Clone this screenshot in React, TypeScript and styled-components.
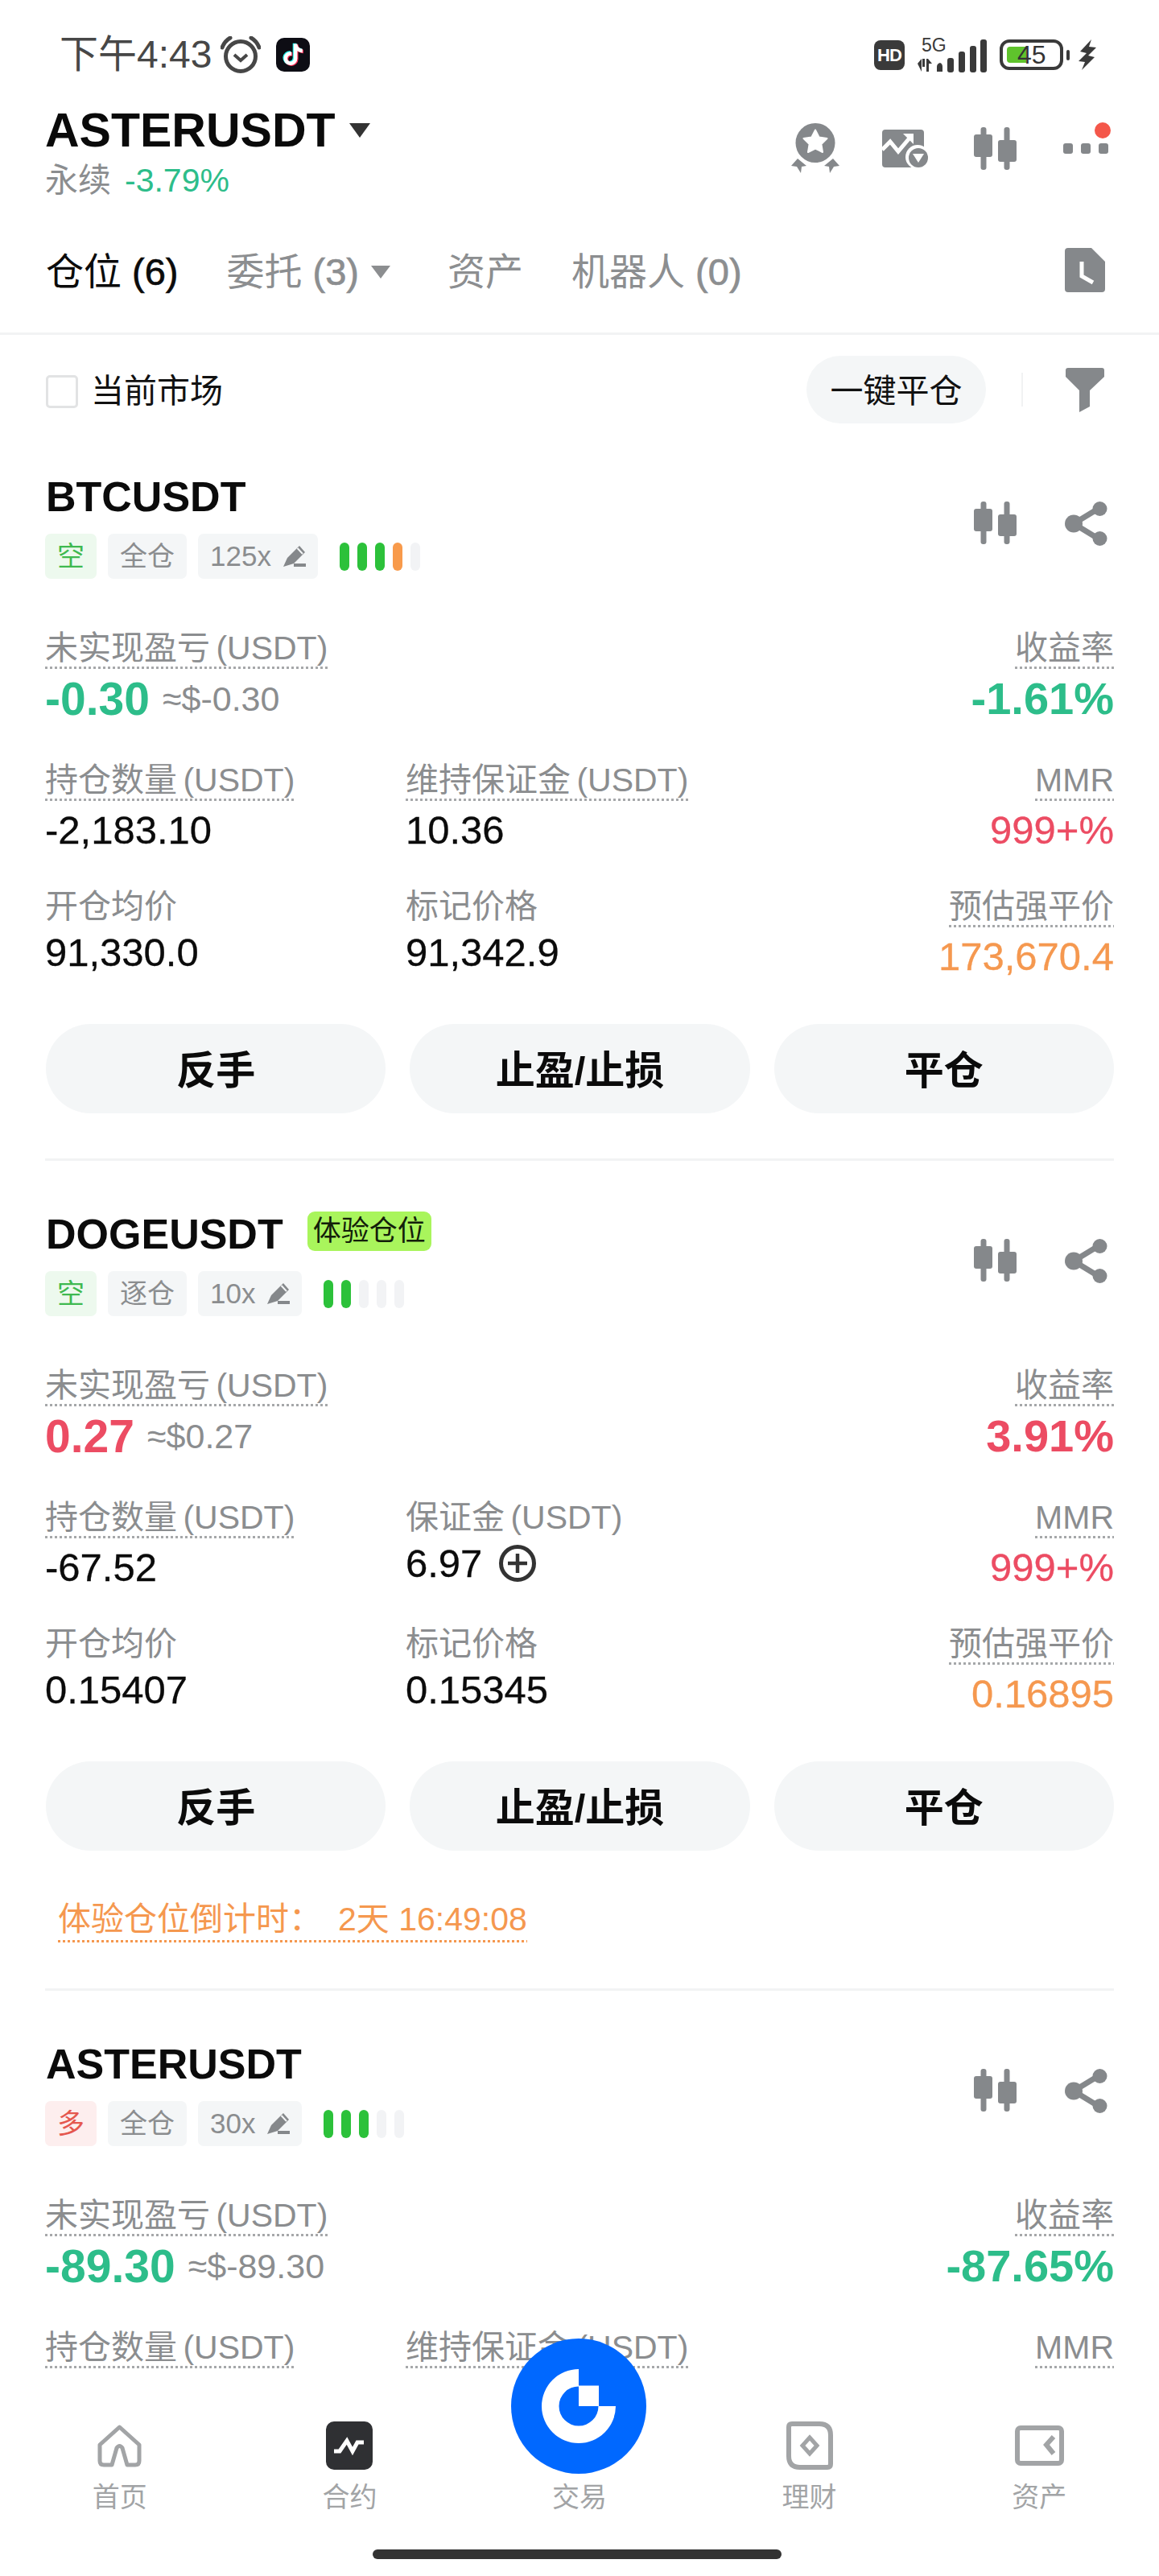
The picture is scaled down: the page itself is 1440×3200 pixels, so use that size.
import React from "react";
import styled, { createGlobalStyle } from "styled-components";

const GlobalStyle = createGlobalStyle`
  html, body { margin: 0; padding: 0; background: #fff; }
  * { box-sizing: border-box; }
  #root { width: 1440px; height: 3200px; }
`;

const GRAY = "#85888b";
const LABEL = "#8b8d8f";
const GREEN = "#2dbd8a";
const RED = "#ec4c63";
const ORANGE = "#f5984f";
const SOFT = "#f4f6f7";
const NAV = "#a2a4a6";

const Page = styled.div`
  position: relative;
  width: 1440px;
  height: 3200px;
  overflow: hidden;
  background: #fff;
  color: #0b0b0b;
  font-family: "Liberation Sans", "Noto Sans CJK SC", sans-serif;
`;

/* status bar */
const StatusBar = styled.div`
  height: 130px;
  padding: 45px 78px 0 74px;
  display: flex;
  justify-content: space-between;
  align-items: flex-start;
`;
const StatusLeft = styled.div`
  display: flex;
  align-items: center;
  height: 46px;
`;
const StatusTime = styled.span`
  font-size: 48px;
  line-height: 46px;
  color: #474747;
  margin-right: 11px;
`;
const AlarmSlot = styled.span`
  display: flex;
  margin-right: 19px;
`;
const StatusRight = styled.div`
  display: flex;
  align-items: center;
  height: 46px;
`;
const HdBadge = styled.span`
  width: 38px;
  height: 37px;
  background: #3a3a3a;
  border-radius: 8px;
  color: #fff;
  font-size: 22px;
  font-weight: 700;
  line-height: 37px;
  text-align: center;
  letter-spacing: -1px;
  margin-right: 16px;
`;
const NetworkBlock = styled.div`
  position: relative;
  width: 86px;
  height: 46px;
  margin-right: 16px;
`;
const FiveG = styled.span`
  position: absolute;
  left: 5px;
  top: 0;
  font-size: 23px;
  line-height: 22px;
  color: #3a3a3a;
`;
const Battery = styled.div`
  position: relative;
  width: 79px;
  height: 38px;
  border: 4px solid #3a3a3a;
  border-radius: 12px;
  padding: 4px;
  margin-right: 4px;
  text-align: center;
`;
const BatteryFill = styled.div`
  position: absolute;
  left: 5px;
  top: 5px;
  bottom: 5px;
  width: 24px;
  background: #5fc32c;
  border-radius: 4px 0 0 4px;
`;
const BatteryText = styled.span`
  position: absolute;
  left: 18px;
  top: -3px;
  font-size: 32px;
  line-height: 36px;
  color: #333;
`;
const BatteryNub = styled.div`
  width: 4px;
  height: 13px;
  background: #3a3a3a;
  border-radius: 2px;
  margin-right: 11px;
`;

/* header */
const Header = styled.div`
  padding: 0 63px 0 56px;
  height: 118px;
  display: flex;
  justify-content: space-between;
  align-items: flex-start;
`;
const TitleRow = styled.div`
  display: flex;
  align-items: center;
  height: 64px;
`;
const MainTitle = styled.span`
  font-size: 59px;
  font-weight: 700;
  line-height: 64px;
  color: #0a0a0a;
`;
const Caret = styled.i<{ $w: number; $h: number; $c: string; $ml: number }>`
  display: block;
  width: 0;
  height: 0;
  margin-left: ${(p) => p.$ml}px;
  border-left: ${(p) => p.$w / 2}px solid transparent;
  border-right: ${(p) => p.$w / 2}px solid transparent;
  border-top: ${(p) => p.$h}px solid ${(p) => p.$c};
`;
const SubRow = styled.div`
  display: flex;
  gap: 17px;
  margin-top: 6px;
  font-size: 41px;
  line-height: 48px;
`;
const SubLabel = styled.span`
  color: ${LABEL};
`;
const SubChange = styled.span`
  color: ${GREEN};
`;
const HeaderIcons = styled.div`
  height: 62px;
  margin-top: 23px;
  display: flex;
  align-items: center;
`;
const HeaderIconSlot = styled.span<{ $ml?: number }>`
  display: flex;
  margin-left: ${(p) => p.$ml ?? 0}px;
`;
const MoreWrap = styled.div`
  position: relative;
  width: 56px;
  height: 13px;
  display: flex;
  justify-content: space-between;
`;
const MoreDot = styled.i`
  display: block;
  width: 12px;
  height: 13px;
  border-radius: 3px;
  background: ${GRAY};
`;
const RedDot = styled.i`
  position: absolute;
  right: -3px;
  top: -26px;
  width: 20px;
  height: 20px;
  border-radius: 50%;
  background: #f4574a;
`;

/* tabs */
const Tabs = styled.div`
  height: 168px;
  padding: 60px 67px 0 57px;
  border-bottom: 3px solid #f2f3f4;
  display: flex;
  align-items: flex-start;
  justify-content: space-between;
`;
const TabList = styled.div`
  display: flex;
  align-items: center;
  gap: 60px;
  height: 60px;
`;
const Tab = styled.div<{ $active?: boolean; $ml?: number }>`
  display: flex;
  align-items: center;
  margin-left: ${(p) => p.$ml ?? 0}px;
  font-size: 47px;
  line-height: 60px;
  white-space: pre;
  color: ${(p) => (p.$active ? "#0b0b0b" : "#8c8e90")};
`;
const TabCount = styled.span`
  -webkit-text-stroke: 0.7px currentColor;
`;

/* filter */
const FilterRow = styled.div`
  padding: 26px 68px 0 57px;
  height: 110px;
  display: flex;
  justify-content: space-between;
  align-items: flex-start;
`;
const CheckLabel = styled.label`
  display: flex;
  align-items: center;
  gap: 16px;
  height: 84px;
  padding-bottom: 4px;
  font-size: 41px;
  color: #111;
`;
const CheckBox = styled.span`
  width: 40px;
  height: 41px;
  border: 3px solid #e2e3e4;
  border-radius: 5px;
  margin-top: 8px;
`;
const FilterActions = styled.div`
  display: flex;
  align-items: center;
`;
const CloseAll = styled.button`
  width: 223px;
  height: 84px;
  border: 0;
  padding: 0 0 4px;
  border-radius: 42px;
  background: ${SOFT};
  font-family: inherit;
  font-size: 41px;
  color: #111;
`;
const VDivider = styled.i`
  display: block;
  width: 2px;
  height: 42px;
  background: #f1f2f3;
  margin: 0 53px 0 44px;
`;

/* card */
const Card = styled.section`
  margin: 0 56px;
  padding-top: 61px;
  border-bottom: 3px solid #f2f3f4;
`;
const CardHead = styled.div`
  display: flex;
  justify-content: space-between;
  align-items: flex-start;
`;
const CardTitleRow = styled.div`
  display: flex;
  align-items: flex-start;
  gap: 30px;
  height: 60px;
  padding-left: 1px;
`;
const CardTitle = styled.span`
  font-size: 52px;
  font-weight: 700;
  line-height: 60px;
`;
const TrialBadge = styled.span`
  height: 49px;
  margin-top: 2px;
  padding: 0 7px;
  border-radius: 9px;
  background: #a9f55c;
  color: #13200a;
  font-size: 35px;
  line-height: 48px;
`;
const TagRow = styled.div`
  display: flex;
  align-items: center;
  margin-top: 16px;
  gap: 14px;
`;
const Tag = styled.span<{ $tone?: "short" | "long" }>`
  display: flex;
  align-items: center;
  gap: 15px;
  height: 56px;
  padding: 0 15px;
  border-radius: 7px;
  font-size: 34px;
  line-height: 56px;
  color: ${(p) => (p.$tone === "short" ? "#3fb950" : p.$tone === "long" ? "#e5584f" : LABEL)};
  background: ${(p) => (p.$tone === "short" ? "#edf9ee" : p.$tone === "long" ? "#fdeeee" : SOFT)};
`;
const LevText = styled.span`
  font-size: 35px;
`;
const Meter = styled.div`
  display: flex;
  gap: 10px;
  margin-left: 13px;
`;
const MeterBar = styled.i<{ $c: string }>`
  display: block;
  width: 12px;
  height: 35px;
  border-radius: 6px;
  background: ${(p) => p.$c};
`;
const CardIcons = styled.div`
  display: flex;
  gap: 60px;
  margin: 36px 8px 0 0;
`;
const DataGrid = styled.div`
  display: grid;
  grid-template-columns: 448px 1fr auto;
  grid-template-rows: 164px 157px 169px;
  margin-top: 63px;
`;
const Cell = styled.div<{ $right?: boolean; $col: number }>`
  grid-column: ${(p) => p.$col};
  display: flex;
  flex-direction: column;
  align-items: ${(p) => (p.$right ? "flex-end" : "flex-start")};
`;
const Label = styled.span<{ $dotted?: boolean }>`
  display: block;
  font-size: 41px;
  line-height: 46px;
  word-spacing: -4px;
  color: ${LABEL};
  white-space: nowrap;
  ${(p) =>
    p.$dotted
      ? `padding-bottom: 3px;
         margin-bottom: 8px;
         background: linear-gradient(to right, #a6a8aa 50%, transparent 50%) left bottom / 6px 3px repeat-x;`
      : `margin-bottom: 6px;`}
`;
const PnlRow = styled.div`
  display: flex;
  align-items: center;
  gap: 16px;
`;
const PnlValue = styled.span<{ $c: string }>`
  font-size: 57px;
  font-weight: 700;
  line-height: 58px;
  color: ${(p) => p.$c};
`;
const RoeValue = styled.span<{ $c: string }>`
  font-size: 56px;
  font-weight: 700;
  line-height: 58px;
  color: ${(p) => p.$c};
`;
const ApproxValue = styled.span`
  font-size: 43px;
  line-height: 58px;
  color: ${LABEL};
`;
const Value = styled.span<{ $c?: string }>`
  display: flex;
  align-items: center;
  gap: 20px;
  font-size: 49px;
  line-height: 56px;
  -webkit-text-stroke: 0.3px currentColor;
  color: ${(p) => p.$c ?? "#0b0b0b"};
`;
const Actions = styled.div`
  display: grid;
  grid-template-columns: repeat(3, 1fr);
  gap: 30px;
  padding-left: 1px;
  margin-bottom: 56px;
`;
const ActionButton = styled.button`
  height: 111px;
  border: 0;
  padding: 0 0 5px;
  border-radius: 56px;
  background: ${SOFT};
  color: #0b0b0b;
  font-family: inherit;
  font-size: 49px;
  font-weight: 700;
`;
const Countdown = styled.div`
  display: inline-flex;
  gap: 20px;
  margin: 6px 0 57px 16px;
  padding-bottom: 6px;
  font-size: 41px;
  line-height: 46px;
  color: ${ORANGE};
  background: linear-gradient(to right, ${ORANGE} 50%, transparent 50%) left bottom / 6px 3px repeat-x;
`;

/* nav */
const BottomNav = styled.nav`
  position: absolute;
  left: 0;
  right: 0;
  bottom: 0;
  height: 250px;
  padding: 58px 6px 0;
  background: #fff;
`;
const NavGrid = styled.div`
  display: grid;
  grid-template-columns: repeat(5, 1fr);
`;
const NavItem = styled.div`
  display: flex;
  flex-direction: column;
  align-items: center;
`;
const NavIconSlot = styled.div`
  height: 60px;
  display: flex;
  align-items: center;
  justify-content: center;
`;
const NavLabel = styled.span`
  margin-top: 12px;
  font-size: 34px;
  line-height: 44px;
  color: ${NAV};
`;
const HomeBar = styled.div`
  position: absolute;
  left: 463px;
  width: 508px;
  bottom: 21px;
  height: 12px;
  border-radius: 6px;
  background: #333;
`;
const TradeButton = styled.div`
  position: absolute;
  left: 635px;
  top: 2905px;
  width: 168px;
  height: 168px;
  border-radius: 50%;
  background: #0068ff;
  display: flex;
  align-items: center;
  justify-content: center;
`;

/* icons */
const CandleIcon = () => (
  <svg width="53" height="53" viewBox="0 0 53 53" fill={GRAY}>
    <rect x="8.5" y="0" width="7" height="53" rx="3" />
    <rect x="0" y="9" width="23" height="28" rx="3" />
    <rect x="37.5" y="0" width="7" height="53" rx="3" />
    <rect x="30" y="16" width="23" height="27" rx="3" />
  </svg>
);
const ShareIcon = () => (
  <svg width="53" height="55" viewBox="0 0 53 55" fill={GRAY}>
    <path d="M43 8 11 27.5 43 47" fill="none" stroke={GRAY} strokeWidth="7" />
    <circle cx="43.5" cy="9" r="9" />
    <circle cx="11" cy="27.5" r="11" />
    <circle cx="43.5" cy="46" r="9" />
  </svg>
);
const PencilIcon = () => (
  <svg width="28" height="26" viewBox="0 0 28 26" fill={GRAY}>
    <path d="M20 0 27 8 13 22 0 26 5 15Z" />
    <rect x="13" y="22" width="15" height="4" />
    <path d="M17.5 3 24 10" stroke="#f4f6f7" strokeWidth="2" />
  </svg>
);
const BadgeIcon = () => (
  <svg width="60" height="62" viewBox="0 0 60 62" fill={GRAY}>
    <circle cx="30" cy="24.5" r="24.5" />
    <path
      d="M30 8.5 34.6 17.4 44.5 19 37.4 26.1 39 36 30 31.5 21 36 22.6 26.1 15.5 19 25.4 17.4Z"
      fill="#fff"
      stroke="#fff"
      strokeWidth="2"
      strokeLinejoin="round"
    />
    <path d="M0 53 8 44 19 53 13 54 12 62 7 54Z" />
    <path d="M60 53 52 44 41 53 47 54 48 62 53 54Z" />
  </svg>
);
const ChartIcon = () => (
  <svg width="58" height="47" viewBox="0 0 58 47">
    <rect x="0" y="0" width="52" height="47" rx="4" fill={GRAY} />
    <path d="M0 25 10 15 20 27 37 7" fill="none" stroke="#fff" strokeWidth="5" />
    <path d="M26 5H39V18Z" fill="#fff" />
    <circle cx="44" cy="34" r="15" fill="#fff" />
    <circle cx="45" cy="35" r="12" fill={GRAY} />
    <path d="M38 30H52L45 41Z" fill="#fff" />
  </svg>
);
const DocIcon = () => (
  <svg width="50" height="55" viewBox="0 0 50 55">
    <path d="M4 0H33L50 17V51Q50 55 46 55H4Q0 55 0 51V4Q0 0 4 0Z" fill={GRAY} />
    <path d="M21 17V35L35 43" fill="none" stroke="#fff" strokeWidth="5" />
  </svg>
);
const FunnelIcon = () => (
  <svg width="48" height="55" viewBox="0 0 48 55" fill={GRAY}>
    <path d="M3 0H45Q48 0 48 3V11L30 28V48L17 55V28L0 11V3Q0 0 3 0Z" />
  </svg>
);
const PlusCircle = () => (
  <svg width="48" height="46" viewBox="0 0 48 46" fill="none" stroke="#333">
    <circle cx="24" cy="23" r="20.5" strokeWidth="5" />
    <path d="M12 23H36M24 11V35" strokeWidth="4.5" />
  </svg>
);
const AlarmIcon = () => (
  <svg width="50" height="46" viewBox="0 0 50 46" fill="none" stroke="#474747">
    <circle cx="25" cy="25" r="18.5" strokeWidth="5" />
    <path d="M17 23 25 30 33 23" strokeWidth="4" />
    <path d="M2 14Q5 6 12 2M48 14Q45 6 38 2" strokeWidth="5" strokeLinecap="round" />
  </svg>
);
const TIKTOK =
  "M448,209.91a210.06,210.06,0,0,1-122.77-39.25V349.38A162.55,162.55,0,1,1,185,188.31V278.2a74.62,74.62,0,1,0,52.23,71.18V0l88,0a121.18,121.18,0,0,0,1.86,22.17h0A122.18,122.18,0,0,0,381,102.39a121.43,121.43,0,0,0,67,20.14Z";
const TiktokIcon = () => (
  <svg width="42" height="42" viewBox="0 0 42 42">
    <rect width="42" height="42" rx="10" fill="#0d0d14" />
    <g transform="translate(9.5 7.5) scale(0.052)">
      <path d={TIKTOK} fill="#25f4ee" transform="translate(-22 -16)" />
      <path d={TIKTOK} fill="#fe2c55" transform="translate(22 16)" />
      <path d={TIKTOK} fill="#fff" />
    </g>
  </svg>
);
const NetIcon = () => (
  <svg width="86" height="46" viewBox="0 0 86 46" fill="#3a3a3a">
    <path d="M0 34 5 28V44ZM6 28H9V38H6ZM11 28 11 44 14 44 14 34 18 34 13 28Z" />
    <path d="M24 44V38Q24 34 28 33 31 34 31 38V44Z" />
    <rect x="37" y="27" width="8" height="18" rx="3" />
    <rect x="51" y="19" width="8" height="26" rx="3" />
    <rect x="65" y="12" width="8" height="33" rx="3" />
    <rect x="78" y="4" width="8" height="41" rx="3" />
  </svg>
);
const BoltIcon = () => (
  <svg width="22" height="38" viewBox="0 0 22 38" fill="#3a3a3a">
    <path d="M16 0 2 15 10 17 0 27 8 28 4 38 20 22 12 20 22 10 13 9Z" />
  </svg>
);
const HomeIcon = () => (
  <svg width="55" height="53" viewBox="0 0 55 53" fill="none" stroke={NAV} strokeWidth="5" strokeLinejoin="round">
    <path d="M27.5 3 52 25V45Q52 50 47 50H37L31 29Q27.5 24 24 29L18 50H8Q3 50 3 45V25Z" />
  </svg>
);
const ContractIcon = () => (
  <svg width="58" height="60" viewBox="0 0 58 60">
    <rect width="58" height="60" rx="10" fill="#2f3033" />
    <path d="M10 37H17L26 24 33 37 39 26H47" fill="none" stroke="#fff" strokeWidth="5" />
  </svg>
);
const EarnIcon = () => (
  <svg width="58" height="60" viewBox="0 0 58 60" fill="none" stroke={NAV} strokeWidth="6">
    <path d="M7 3H41Q55 3 55 17V53Q55 57 51 57H17Q3 57 3 43V7Q3 3 7 3Z" />
    <path d="M29 20 38 30 29 40 20 30Z" strokeWidth="5" />
  </svg>
);
const AssetIcon = () => (
  <svg width="61" height="50" viewBox="0 0 61 50" fill="none" stroke={NAV} strokeWidth="6">
    <rect x="3" y="3" width="55" height="44" rx="4" />
    <path d="M48 14 39 24 48 35" strokeWidth="6" />
  </svg>
);
const LogoMark = () => (
  <svg width="92" height="92" viewBox="0 0 92 92" fill="#fff">
    <path d="M46 0V21.5A24.5 24.5 0 1 0 70.5 46H92A46 46 0 1 1 46 0Z" />
    <rect x="46" y="20.5" width="25" height="25.5" />
  </svg>
);

/* data */
type Field = { label: string; dotted?: boolean; value?: string; color?: string; plus?: boolean };
type Position = {
  symbol: string;
  trial?: boolean;
  side: "short" | "long";
  mode: string;
  lev: string;
  meter: string[];
  pnl: string;
  pnlColor: string;
  approx: string;
  roe: string;
  row2: Field[];
  row3?: Field[];
  actions?: boolean;
  countdown?: boolean;
};

const G = "#2cc13a";
const E = "#f2f3f5";
const O = "#f89a4b";

const positions: Position[] = [
  {
    symbol: "BTCUSDT",
    side: "short",
    mode: "全仓",
    lev: "125x",
    meter: [G, G, G, O, E],
    pnl: "-0.30",
    pnlColor: GREEN,
    approx: "≈$-0.30",
    roe: "-1.61%",
    row2: [
      { label: "持仓数量 (USDT)", dotted: true, value: "-2,183.10" },
      { label: "维持保证金 (USDT)", dotted: true, value: "10.36" },
      { label: "MMR", dotted: true, value: "999+%", color: RED },
    ],
    row3: [
      { label: "开仓均价", value: "91,330.0" },
      { label: "标记价格", value: "91,342.9" },
      { label: "预估强平价", dotted: true, value: "173,670.4", color: ORANGE },
    ],
    actions: true,
  },
  {
    symbol: "DOGEUSDT",
    trial: true,
    side: "short",
    mode: "逐仓",
    lev: "10x",
    meter: [G, G, E, E, E],
    pnl: "0.27",
    pnlColor: RED,
    approx: "≈$0.27",
    roe: "3.91%",
    row2: [
      { label: "持仓数量 (USDT)", dotted: true, value: "-67.52" },
      { label: "保证金 (USDT)", value: "6.97", plus: true },
      { label: "MMR", dotted: true, value: "999+%", color: RED },
    ],
    row3: [
      { label: "开仓均价", value: "0.15407" },
      { label: "标记价格", value: "0.15345" },
      { label: "预估强平价", dotted: true, value: "0.16895", color: ORANGE },
    ],
    actions: true,
    countdown: true,
  },
  {
    symbol: "ASTERUSDT",
    side: "long",
    mode: "全仓",
    lev: "30x",
    meter: [G, G, G, E, E],
    pnl: "-89.30",
    pnlColor: GREEN,
    approx: "≈$-89.30",
    roe: "-87.65%",
    row2: [
      { label: "持仓数量 (USDT)", dotted: true },
      { label: "维持保证金 (USDT)", dotted: true },
      { label: "MMR", dotted: true },
    ],
  },
];

const FieldCell = ({ f, col }: { f: Field; col: number }) => (
  <Cell $col={col} $right={col === 3}>
    <Label $dotted={f.dotted}>{f.label}</Label>
    {f.value && (
      <Value $c={f.color}>
        {f.value}
        {f.plus && <PlusCircle />}
      </Value>
    )}
  </Cell>
);

const PositionCard = ({ p }: { p: Position }) => (
  <Card>
    <CardHead>
      <div>
        <CardTitleRow>
          <CardTitle>{p.symbol}</CardTitle>
          {p.trial && <TrialBadge>体验仓位</TrialBadge>}
        </CardTitleRow>
        <TagRow>
          <Tag $tone={p.side}>{p.side === "short" ? "空" : "多"}</Tag>
          <Tag>{p.mode}</Tag>
          <Tag>
            <LevText>{p.lev}</LevText>
            <PencilIcon />
          </Tag>
          <Meter>
            {p.meter.map((c, i) => (
              <MeterBar key={i} $c={c} />
            ))}
          </Meter>
        </TagRow>
      </div>
      <CardIcons>
        <CandleIcon />
        <ShareIcon />
      </CardIcons>
    </CardHead>
    <DataGrid>
      <Cell $col={1}>
        <Label $dotted>未实现盈亏 (USDT)</Label>
        <PnlRow>
          <PnlValue $c={p.pnlColor}>{p.pnl}</PnlValue>
          <ApproxValue>{p.approx}</ApproxValue>
        </PnlRow>
      </Cell>
      <Cell $col={3} $right>
        <Label $dotted>收益率</Label>
        <RoeValue $c={p.pnlColor}>{p.roe}</RoeValue>
      </Cell>
      {p.row2.map((f, i) => (
        <FieldCell key={f.label} f={f} col={i + 1} />
      ))}
      {p.row3?.map((f, i) => (
        <FieldCell key={f.label} f={f} col={i + 1} />
      ))}
    </DataGrid>
    {p.actions && (
      <Actions>
        <ActionButton>反手</ActionButton>
        <ActionButton>止盈/止损</ActionButton>
        <ActionButton>平仓</ActionButton>
      </Actions>
    )}
    {p.countdown && (
      <Countdown>
        <span>体验仓位倒计时：</span>
        <span>2天 16:49:08</span>
      </Countdown>
    )}
  </Card>
);

export default function App() {
  return (
    <Page>
      <GlobalStyle />
      <StatusBar>
        <StatusLeft>
          <StatusTime>下午4:43</StatusTime>
          <AlarmSlot>
            <AlarmIcon />
          </AlarmSlot>
          <TiktokIcon />
        </StatusLeft>
        <StatusRight>
          <HdBadge>HD</HdBadge>
          <NetworkBlock>
            <NetIcon />
            <FiveG>5G</FiveG>
          </NetworkBlock>
          <Battery>
            <BatteryFill />
            <BatteryText>45</BatteryText>
          </Battery>
          <BatteryNub />
          <BoltIcon />
        </StatusRight>
      </StatusBar>

      <Header>
        <div>
          <TitleRow>
            <MainTitle>ASTERUSDT</MainTitle>
            <Caret $w={26} $h={18} $c="#333" $ml={17} />
          </TitleRow>
          <SubRow>
            <SubLabel>永续</SubLabel>
            <SubChange>-3.79%</SubChange>
          </SubRow>
        </div>
        <HeaderIcons>
          <HeaderIconSlot>
            <BadgeIcon />
          </HeaderIconSlot>
          <HeaderIconSlot $ml={53}>
            <ChartIcon />
          </HeaderIconSlot>
          <HeaderIconSlot $ml={56}>
            <CandleIcon />
          </HeaderIconSlot>
          <HeaderIconSlot $ml={58}>
            <MoreWrap>
              <MoreDot />
              <MoreDot />
              <MoreDot />
              <RedDot />
            </MoreWrap>
          </HeaderIconSlot>
        </HeaderIcons>
      </Header>

      <Tabs>
        <TabList>
          <Tab $active>
            仓位 <TabCount>(6)</TabCount>
          </Tab>
          <Tab>
            委托 <TabCount>(3)</TabCount>
            <Caret $w={24} $h={16} $c="#8c8e90" $ml={15} />
          </Tab>
          <Tab $ml={11}>资产</Tab>
          <Tab>
            机器人 <TabCount>(0)</TabCount>
          </Tab>
        </TabList>
        <DocIcon />
      </Tabs>

      <FilterRow>
        <CheckLabel>
          <CheckBox />
          当前市场
        </CheckLabel>
        <FilterActions>
          <CloseAll>一键平仓</CloseAll>
          <VDivider />
          <FunnelIcon />
        </FilterActions>
      </FilterRow>

      {positions.map((p) => (
        <PositionCard key={p.symbol} p={p} />
      ))}

      <BottomNav>
        <NavGrid>
          <NavItem>
            <NavIconSlot>
              <HomeIcon />
            </NavIconSlot>
            <NavLabel>首页</NavLabel>
          </NavItem>
          <NavItem>
            <NavIconSlot>
              <ContractIcon />
            </NavIconSlot>
            <NavLabel>合约</NavLabel>
          </NavItem>
          <NavItem>
            <NavIconSlot />
            <NavLabel>交易</NavLabel>
          </NavItem>
          <NavItem>
            <NavIconSlot>
              <EarnIcon />
            </NavIconSlot>
            <NavLabel>理财</NavLabel>
          </NavItem>
          <NavItem>
            <NavIconSlot>
              <AssetIcon />
            </NavIconSlot>
            <NavLabel>资产</NavLabel>
          </NavItem>
        </NavGrid>
        <HomeBar />
      </BottomNav>
      <TradeButton>
        <LogoMark />
      </TradeButton>
    </Page>
  );
}
